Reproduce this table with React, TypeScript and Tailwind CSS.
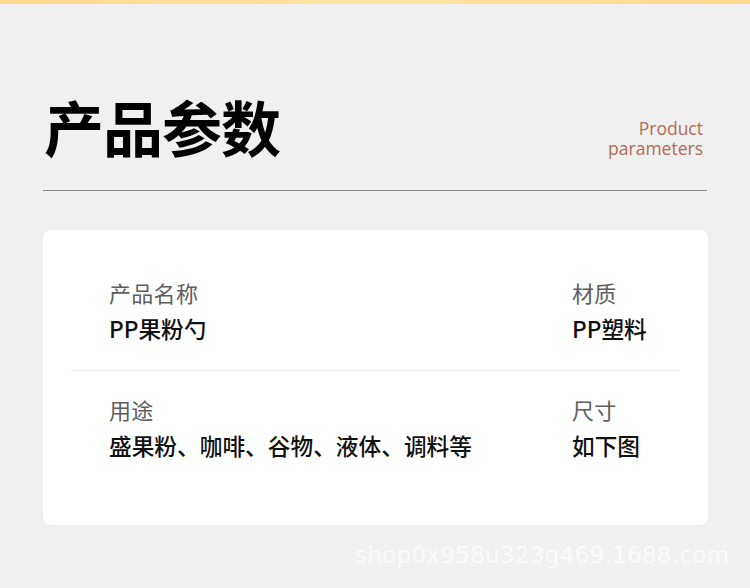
const cjk = '"Noto Sans CJK SC", "Noto Sans", sans-serif';

interface ParamRow {
  leftLabel: string;
  leftValue: string;
  rightLabel: string;
  rightValue: string;
}

const rows: ParamRow[] = [
  { leftLabel: '产品名称', leftValue: 'PP果粉勺', rightLabel: '材质', rightValue: 'PP塑料' },
  { leftLabel: '用途', leftValue: '盛果粉、咖啡、谷物、液体、调料等', rightLabel: '尺寸', rightValue: '如下图' },
];

function Cell({ label, value }: { label: string; value: string }) {
  return (
    <div className="flex flex-col gap-[15px]">
      <div className="text-[22px] leading-[22px] text-[#5e5e5e] tracking-[0.3px]">{label}</div>
      <div className="text-[22.7px] leading-[22px] font-medium text-[#111]">{value}</div>
    </div>
  );
}

export default function App() {
  return (
    <div className="relative w-[750px] h-[588px] bg-[#f0f0f0] overflow-hidden" style={{ fontFamily: cjk }}>
      <div className="h-[4px] bg-gradient-to-r from-[#fdd98c] via-[#fee3a6] to-[#fdd98c]" />

      {/* header */}
      <div className="mx-[43px] mt-[89px] flex items-end justify-between pb-[31px] border-b border-[#8a8a8a]">
        <h1 className="text-[60px] leading-[66px] font-bold text-black tracking-[-1px] pl-[1px]">产品参数</h1>
        <div
          className="text-right text-[17.5px] leading-[20px] text-[#b26b56] pr-[4px] pb-[1px]"
          style={{ fontFamily: '"Open Sans", "Noto Sans", sans-serif' }}
        >
          <div>Product</div>
          <div>parameters</div>
        </div>
      </div>

      {/* card */}
      <div className="mx-[43px] mt-[39px] w-[665px] bg-white rounded-[8px] pt-[51px] pb-[68px]">
        {rows.map((row, i) => (
          <div key={row.leftLabel}>
            {i > 0 && <div className="ml-[28px] mr-[29px] h-px bg-[#ececec] mt-[30px] mb-[27px]" />}
            <div className="grid grid-cols-[463px_1fr] pl-[66px]">
              <Cell label={row.leftLabel} value={row.leftValue} />
              <Cell label={row.rightLabel} value={row.rightValue} />
            </div>
          </div>
        ))}
      </div>

      {/* watermark */}
      <div
        className="absolute left-[355px] top-[540px] text-[23px] leading-[30px] text-white/70 tracking-[0.3px]"
        style={{ fontFamily: '"DejaVu Sans", sans-serif' }}
      >
        shop0x958u323g469.1688.com
      </div>
    </div>
  );
}
